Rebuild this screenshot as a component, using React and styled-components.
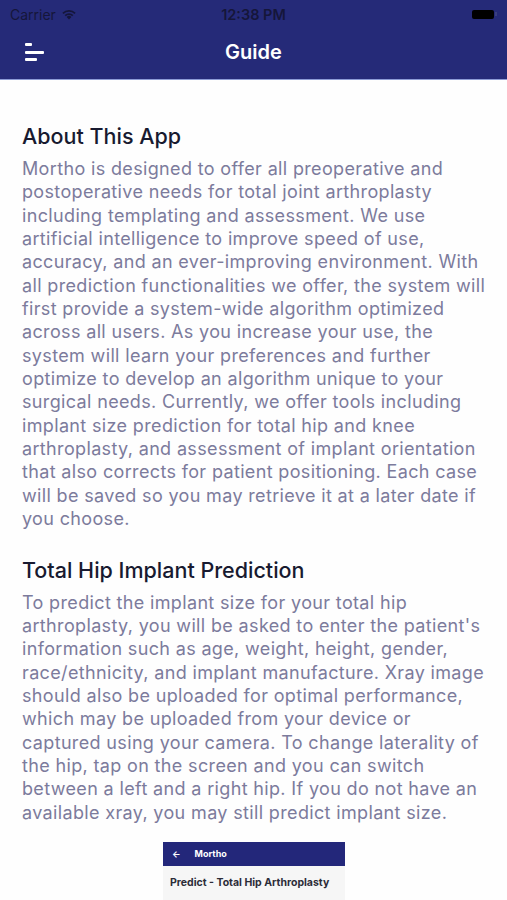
import React from "react";
import styled, { createGlobalStyle } from "styled-components";

const Global = createGlobalStyle`
  html, body { margin: 0; padding: 0; background: #fff; }
  body { font-family: "Inter", "Liberation Sans", sans-serif; }
`;

const Page = styled.div`
  width: 507px;
  height: 900px;
  overflow: hidden;
  background: #fefefe;
`;

const Header = styled.header`
  background: #252a78;
  height: 79px;
  border-bottom: 1px solid #8d9bd6;
  display: flex;
  flex-direction: column;
`;

const StatusBar = styled.div`
  height: 28px;
  display: grid;
  grid-template-columns: 1fr auto 1fr;
  align-items: center;
  padding: 0 10px;
  color: #15163a;
  font-size: 14px;
`;

const Carrier = styled.div`
  display: flex;
  align-items: center;
  gap: 5px;
`;

const Time = styled.div`
  font-weight: 600;
  font-size: 14.5px;
`;

const BatteryWrap = styled.div`
  justify-self: end;
  display: flex;
  align-items: center;
`;

const Battery = styled.div`
  width: 22px;
  height: 9px;
  background: #000;
  border-radius: 2px;
`;

const BatteryTip = styled.div`
  width: 2px;
  height: 4px;
  background: #3a3f80;
  margin-left: 1px;
`;

const NavBar = styled.div`
  flex: 1;
  display: flex;
  align-items: center;
  justify-content: center;
  position: relative;
  padding-bottom: 4px;
`;

const MenuButton = styled.div`
  position: absolute;
  left: 25px;
  top: 15px;
  width: 22px;
  height: 20px;
  display: flex;
  flex-direction: column;
  gap: 4.5px;
`;

const MenuLine = styled.span`
  display: block;
  height: 3px;
  border-radius: 1px;
  background: #fff;
  width: ${(p) => p.w}px;
`;

const Title = styled.h1`
  margin: 0;
  color: #fff;
  font-size: 20px;
  font-weight: 600;
`;

const Content = styled.main`
  padding: 42px 18px 0 22px;
`;

const Section = styled.section`
  margin-bottom: 25px;
`;

const Heading = styled.h2`
  margin: 0 0 7px 0;
  font-size: 21.5px;
  font-weight: 500;
  color: #181a30;
  line-height: 28px;
`;

const Body = styled.p`
  margin: 0;
  font-size: 18px;
  line-height: 23.35px;
  letter-spacing: 0.35px;
  color: #7c7b9c;
`;

const Shot = styled.div`
  margin: 18px 0 0 141px;
  width: 182px;
  display: flex;
  flex-direction: column;
`;

const ShotBar = styled.div`
  background: #23277a;
  height: 24px;
  display: flex;
  align-items: center;
  gap: 14px;
  padding-left: 9px;
  color: #fff;
  font-size: 9px;
  font-weight: 700;
`;

const ShotBody = styled.div`
  background: #f6f6f6;
  height: 34px;
  padding: 10px 7px 0;
  box-sizing: border-box;
  font-size: 10.5px;
  font-weight: 700;
  color: #2c2c38;
`;

const Wifi = () => (
  <svg width="16" height="12" viewBox="0 0 16 12">
    <path d="M8 11.5 L5.6 9 A3.4 3.4 0 0 1 10.4 9 Z" fill="#15163a" />
    <path d="M3.6 7 A6.3 6.3 0 0 1 12.4 7 L11.2 8.2 A4.6 4.6 0 0 0 4.8 8.2 Z" fill="#15163a" />
    <path d="M1.3 4.7 A9.6 9.6 0 0 1 14.7 4.7 L13.5 5.9 A7.9 7.9 0 0 0 2.5 5.9 Z" fill="#15163a" />
  </svg>
);

export default function App() {
  return (
    <Page>
      <Global />
      <Header>
        <StatusBar>
          <Carrier>
            Carrier <Wifi />
          </Carrier>
          <Time>12:38 PM</Time>
          <BatteryWrap>
            <Battery />
            <BatteryTip />
          </BatteryWrap>
        </StatusBar>
        <NavBar>
          <MenuButton>
            <MenuLine w={7} />
            <MenuLine w={19} />
            <MenuLine w={12} />
          </MenuButton>
          <Title>Guide</Title>
        </NavBar>
      </Header>
      <Content>
        <Section>
          <Heading>About This App</Heading>
          <Body>
            Mortho is designed to offer all preoperative and postoperative needs for total joint
            arthroplasty including templating and assessment. We use artificial intelligence to
            improve speed of use, accuracy, and an ever-improving environment. With all prediction
            functionalities we offer, the system will first provide a system-wide algorithm
            optimized across all users. As you increase your use, the system will learn your
            preferences and further optimize to develop an algorithm unique to your surgical needs.
            Currently, we offer tools including implant size prediction for total hip and knee
            arthroplasty, and assessment of implant orientation that also corrects for patient
            positioning. Each case will be saved so you may retrieve it at a later date if you
            choose.
          </Body>
        </Section>
        <Section>
          <Heading>Total Hip Implant Prediction</Heading>
          <Body>
            To predict the implant size for your total hip arthroplasty, you will be asked to enter
            the patient's information such as age, weight, height, gender, race/ethnicity, and
            implant manufacture. Xray image should also be uploaded for optimal performance, which
            may be uploaded from your device or captured using your camera. To change laterality of
            the hip, tap on the screen and you can switch between a left and a right hip. If you do
            not have an available xray, you may still predict implant size.
          </Body>
          <Shot>
            <ShotBar>
              <span>←</span>
              <span>Mortho</span>
            </ShotBar>
            <ShotBody>Predict - Total Hip Arthroplasty</ShotBody>
          </Shot>
        </Section>
      </Content>
    </Page>
  );
}
